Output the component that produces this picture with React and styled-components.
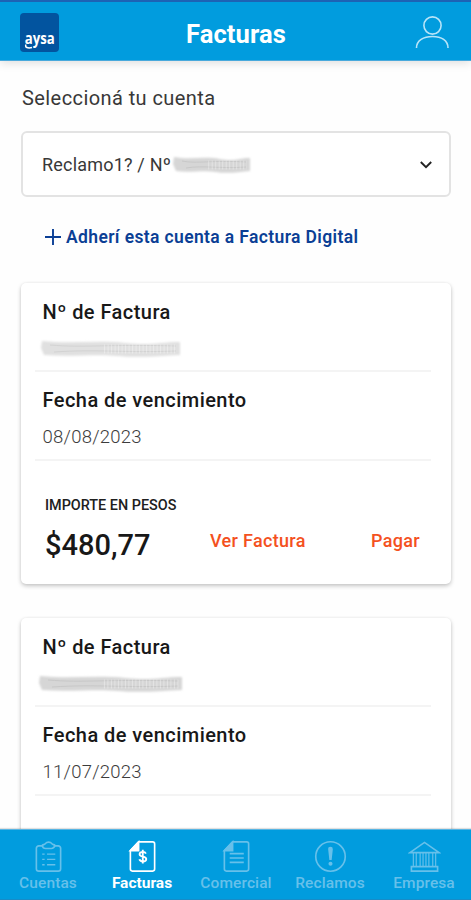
import { useState } from "react";
import styled, { createGlobalStyle } from "styled-components";

const GlobalStyle = createGlobalStyle`
  * {
    box-sizing: border-box;
  }
  body {
    margin: 0;
    background: #fefefe;
    font-family: Roboto, "Liberation Sans", sans-serif;
    color: #1a1a1a;
  }
  button {
    font-family: inherit;
    border: none;
    background: none;
    padding: 0;
    cursor: pointer;
  }
`;

const Screen = styled.div`
  height: 100vh;
  display: flex;
  flex-direction: column;
  overflow: hidden;
`;

const Header = styled.header`
  flex: none;
  z-index: 1;
  height: 61px;
  padding: 3px 22px 0 20px;
  display: grid;
  grid-template-columns: 40px 1fr 34px;
  align-items: center;
  background: #019cde;
  border-top: 2px solid #1d62b4;
  border-bottom: 1px solid #48a9dc;
  box-shadow: 0 2px 9px rgba(0, 0, 0, 0.13);
`;

const Logo = styled.div`
  width: 39px;
  height: 39px;
  border-radius: 4px;
  background: #02549f;
`;

const LogoSvg = styled.svg`
  display: block;
  width: 39px;
  height: 39px;
  overflow: visible;
  font-family: "Open Sans", sans-serif;
  font-weight: 700;
`;

const Title = styled.h1`
  margin: 3px 3px 0 0;
  font-size: 25.5px;
  line-height: 30px;
  font-weight: 700;
  letter-spacing: 0.1px;
  text-align: center;
  color: #fff;
`;

const Content = styled.main`
  flex: 1;
  min-height: 0;
  overflow: hidden;
  padding: 22px 20px 0 21px;
`;

const Label = styled.p`
  margin: 0 0 0 1px;
  font-size: 20px;
  line-height: 30px;
  letter-spacing: 0.42px;
  color: #383838;
`;

const Select = styled.button`
  width: 100%;
  height: 66px;
  margin-top: 18px;
  padding: 1px 17px 0 19px;
  display: flex;
  align-items: center;
  justify-content: space-between;
  background: #fff;
  border: 2px solid #e3e3e3;
  border-radius: 6px;
`;

const Account = styled.span`
  display: flex;
  align-items: center;
  gap: 3px;
  font-size: 18px;
  line-height: 24px;
  letter-spacing: 0.2px;
  color: #383838;
`;

const AddLink = styled.button`
  height: 26px;
  margin: 27px 0 0 24px;
  display: flex;
  align-items: center;
  gap: 5px;
  font-size: 17.5px;
  font-weight: 600;
  letter-spacing: 0.37px;
  color: #0b3f95;
`;

const Card = styled.section`
  height: 301px;
  margin-top: ${({ $first }) => ($first ? "33px" : "34px")};
  padding: 14px 20px 0 14px;
  background: #fff;
  border-radius: 5px;
  box-shadow: 0 2px 4px rgba(0, 0, 0, 0.22), 0 0 3px rgba(0, 0, 0, 0.06);
`;

const Field = styled.div`
  height: ${({ $height }) => $height}px;
  padding: ${({ $top }) => $top}px 0 0 7.5px;
  border-bottom: 2px solid #f4f4f4;
`;

const FieldName = styled.h2`
  margin: 0;
  font-size: 20px;
  line-height: 30px;
  font-weight: 500;
  letter-spacing: 0.45px;
  color: #181818;
`;

const FieldValue = styled.div`
  height: 30px;
  margin-top: 7px;
  display: flex;
  align-items: center;
  font-size: 18.5px;
  line-height: 30px;
  font-weight: 300;
  letter-spacing: 0.25px;
  color: #3c3c3c;
`;

const Summary = styled.div`
  padding: 35px 0 0 10px;
`;

const AmountLabel = styled.div`
  font-size: 14.4px;
  line-height: 20px;
  font-weight: 500;
  color: #202020;
`;

const AmountRow = styled.div`
  height: 40px;
  margin-top: 9px;
  display: grid;
  grid-template-columns: 165px 1fr auto;
  align-items: center;
  padding-right: 11px;
`;

const Amount = styled.strong`
  font-size: 29px;
  line-height: 40px;
  font-weight: 500;
  letter-spacing: 0;
  color: #181818;
`;

const Action = styled.button`
  font-size: 18px;
  line-height: 24px;
  font-weight: 500;
  letter-spacing: 0.32px;
  margin-bottom: 8px;
  text-align: left;
  color: #f4511e;
`;

const TabBar = styled.nav`
  flex: none;
  z-index: 1;
  height: 71px;
  padding-left: 1px;
  display: grid;
  grid-template-columns: repeat(5, 1fr);
  background: #019cde;
  border-top: 1px solid #58b5e3;
  border-bottom: 1px solid #178cc8;
  box-shadow: 0 -1px 1px rgba(0, 0, 0, 0.12);
`;

const Tab = styled.button`
  display: flex;
  flex-direction: column;
  align-items: center;
  padding-top: 10px;
  font-size: 15.5px;
  line-height: 20px;
  font-weight: ${({ $active }) => ($active ? 700 : 500)};
  letter-spacing: ${({ $active }) => ($active ? "0" : "0.1px")};
  color: ${({ $active }) => ($active ? "#fff" : "#67c0ea")};
`;

const TabIcon = styled.svg`
  width: 33px;
  height: 33px;
  fill: none;
  stroke: currentColor;
  stroke-width: 1.7;
`;

const SmudgeSvg = styled.svg`
  display: block;
  flex: none;
  overflow: visible;
  margin-left: ${({ $shift }) => $shift || 0}px;
`;

const Smudge = ({ width, dark, shift }) => {
  const w = width;
  return (
    <SmudgeSvg width={w} height="18" viewBox={`0 0 ${w} 18`} $shift={shift}>
      <defs>
        <filter id="smear" x="-5%" y="-30%" width="110%" height="160%">
          <feGaussianBlur stdDeviation="1" />
        </filter>
      </defs>
      <path
        d={`M0 1 C${w * 0.2} 4 ${w * 0.4} 0 ${w * 0.6} 3 S${w * 0.85} 2 ${w} 2 V15 C${w * 0.85} 16 ${w * 0.7} 18 ${w * 0.55} 16 S${w * 0.2} 17 2 15 L-1 8 Z`}
        fill={dark ? "#d6d6d6" : "#e0e0e0"}
        filter="url(#smear)"
      />
      <path
        d={`M8 5 C${w * 0.3} 8 ${w * 0.5} 4 ${w - 4} 6 M12 12 C${w * 0.4} 9 ${w * 0.6} 13 ${w - 4} 11`}
        fill="none"
        stroke={dark ? "#c8c8c8" : "#d3d3d3"}
        strokeWidth="1"
      />
      <path
        d={`M${w * 0.45} 9 H${w - 3}`}
        fill="none"
        stroke="#fff"
        strokeOpacity="0.35"
        strokeWidth="9"
        strokeDasharray="1 2.500"
      />
    </SmudgeSvg>
  );
};

const icons = {
  Cuentas: (
    <>
      <path d="M10.500 6H7a2.500 2.500 0 0 0-2.500 2.500v21A2.500 2.500 0 0 0 7 32h20a2.500 2.500 0 0 0 2.500-2.500v-21A2.500 2.500 0 0 0 27 6h-3.500" />
      <path d="M10.500 5.500C12 4.500 13 5 14 3.500c1.200-1.800 5-1.800 6.200 0 1 1.500 2 1 3.500 2C23 8 21.500 8.800 20 8.800h-6c-1.700 0-3-1-3.500-3.300z" />
      <path d="M10.500 14.500h2.500M15.500 14.500h8.500M10.500 20h2.500M15.500 20h8.500M10.500 25.500h2.500M15.500 25.500h8.500" strokeWidth="1.400" />
    </>
  ),
  Facturas: (
    <>
      <path d="M13 2h14.500a2 2 0 0 1 2 2v26a2 2 0 0 1-2 2h-21a2 2 0 0 1-2-2V11z" />
      <path d="M4.500 11 13 2v9z" fill="currentColor" />
      <path
        d="M20.500 14c-.5-1.200-1.600-1.800-3.200-1.800-2 0-3.300.9-3.300 2.400 0 3.500 6.900 1.600 6.900 5 0 1.500-1.400 2.500-3.500 2.500-1.900 0-3.200-.8-3.600-2.200M17.300 10v14.200"
        strokeWidth="1.900"
      />
    </>
  ),
  Comercial: (
    <>
      <path d="M13 2h14.500a2 2 0 0 1 2 2v26a2 2 0 0 1-2 2h-21a2 2 0 0 1-2-2V11z" />
      <path d="M4.500 11 13 2v9z" fill="currentColor" />
      <path d="M10 14h14.500M10 18.500h14.500M10 23h14.500" />
    </>
  ),
  Reclamos: (
    <>
      <circle cx="17" cy="17" r="15.200" />
      <path
        d="M17 7a2.400 2.400 0 0 1 2.400 2.500L18.200 20.500h-2.400L14.600 9.500A2.400 2.400 0 0 1 17 7z"
        fill="currentColor"
        stroke="none"
      />
      <circle cx="17" cy="24.400" r="2.100" fill="currentColor" stroke="none" />
    </>
  ),
  Empresa: (
    <>
      <path d="M2 13 17 2.500 32 13z" />
      <path d="M5.500 13v14M8.500 13v14M12.500 13v14M15.500 13v14M18.500 13v14M21.500 13v14M25.500 13v14M28.500 13v14" strokeWidth="1.200" />
      <path d="M3.500 27.500h27V32h-27z" />
    </>
  ),
};

const invoices = [
  { id: 1, due: "08/08/2023", amount: "$480,77", smudge: 138, shift: -1 },
  { id: 2, due: "11/07/2023", smudge: 142, shift: -3 },
];

const Invoice = ({ invoice, first }) => (
  <Card $first={first}>
    <Field $height={75} $top={0}>
      <FieldName>Nº de Factura</FieldName>
      <FieldValue>
        <Smudge width={invoice.smudge} shift={invoice.shift} dark={!first} />
      </FieldValue>
    </Field>
    <Field $height={89} $top={13}>
      <FieldName>Fecha de vencimiento</FieldName>
      <FieldValue>{invoice.due}</FieldValue>
    </Field>
    {invoice.amount && (
      <Summary>
        <AmountLabel>IMPORTE EN PESOS</AmountLabel>
        <AmountRow>
          <Amount>{invoice.amount}</Amount>
          <Action>Ver Factura</Action>
          <Action>Pagar</Action>
        </AmountRow>
      </Summary>
    )}
  </Card>
);

const App = () => {
  const [tab, setTab] = useState("Facturas");

  return (
    <Screen>
      <GlobalStyle />
      <Header>
        <Logo>
          <LogoSvg viewBox="0 0 39 39">
            <text x="4.800" y="31" fontSize="16" textLength="30" lengthAdjust="spacingAndGlyphs" fill="#fff">
              aysa
            </text>
            <path d="M6 31.500c-1.500 3 2 4 6 3" fill="none" stroke="#fff" strokeWidth="1.500" />
          </LogoSvg>
        </Logo>
        <Title>Facturas</Title>
        <svg width="34" height="34" viewBox="0 0 34 34" fill="none" stroke="#b8e4f8" strokeWidth="1.600">
          <circle cx="17.500" cy="9.500" r="8.600" />
          <path d="M1.500 32C1.500 24.500 8.500 20.500 17.500 20.500S33 24.500 33 32" />
        </svg>
      </Header>
      <Content>
        <Label>Seleccioná tu cuenta</Label>
        <Select>
          <Account>
            Reclamo1? / Nº
            <Smudge width={76} dark />
          </Account>
          <svg width="12" height="8" viewBox="0 0 12 8" fill="none" stroke="#222" strokeWidth="1.900">
            <path d="M.8 1 6 6.200 11.200 1" />
          </svg>
        </Select>
        <AddLink>
          <svg width="16" height="16" viewBox="0 0 16 16" fill="none" stroke="currentColor" strokeWidth="1.900">
            <path d="M8 0v16M0 8h16" />
          </svg>
          Adherí esta cuenta a Factura Digital
        </AddLink>
        {invoices.map((invoice, i) => (
          <Invoice key={invoice.id} invoice={invoice} first={i === 0} />
        ))}
      </Content>
      <TabBar>
        {Object.keys(icons).map((name) => (
          <Tab key={name} $active={name === tab} onClick={() => setTab(name)}>
            <TabIcon viewBox="0 0 34 34">{icons[name]}</TabIcon>
            {name}
          </Tab>
        ))}
      </TabBar>
    </Screen>
  );
};

export default App;
